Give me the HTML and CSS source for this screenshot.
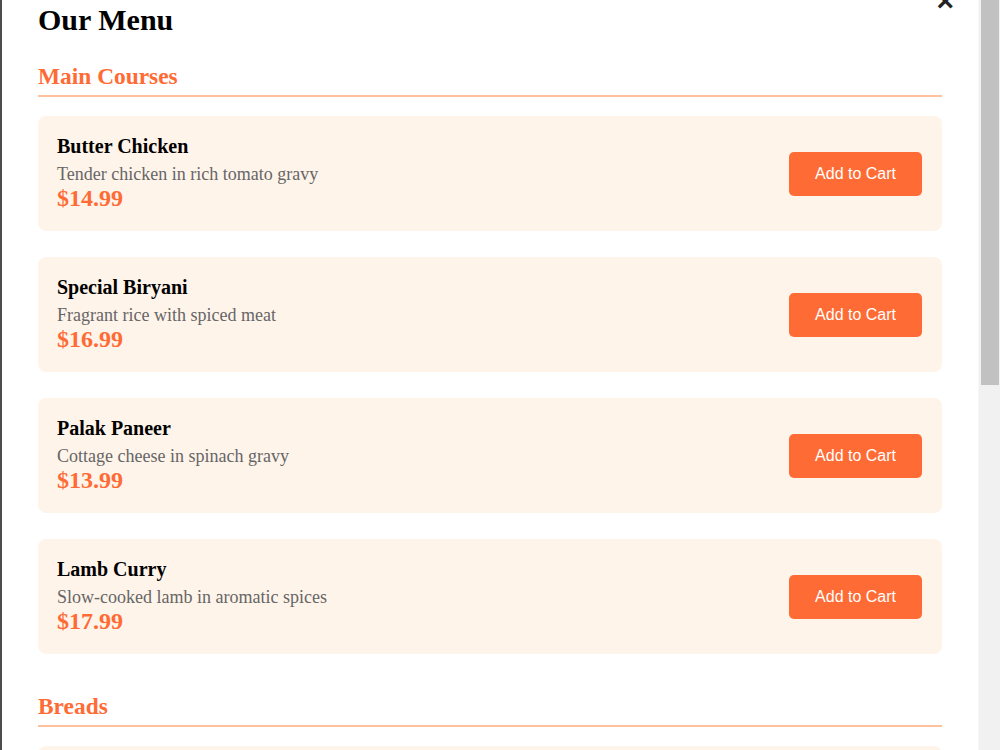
FILE: index.html
```html
<!DOCTYPE html>
<html lang="en">
<head>
  <meta charset="utf-8">
  <title>Our Menu</title>
  <link rel="stylesheet" href="styles.css">
</head>
<body>
  <div class="modal">
    <span class="close">&times;</span>
    <h1>Our Menu</h1>

    <div class="menu-section">
      <h2>Main Courses</h2>
      <div class="menu-item">
        <div class="item-info">
          <h3>Butter Chicken</h3>
          <p class="desc">Tender chicken in rich tomato gravy</p>
          <p class="price">$14.99</p>
        </div>
        <button class="add-btn">Add to Cart</button>
      </div>
      <div class="menu-item">
        <div class="item-info">
          <h3>Special Biryani</h3>
          <p class="desc">Fragrant rice with spiced meat</p>
          <p class="price">$16.99</p>
        </div>
        <button class="add-btn">Add to Cart</button>
      </div>
      <div class="menu-item">
        <div class="item-info">
          <h3>Palak Paneer</h3>
          <p class="desc">Cottage cheese in spinach gravy</p>
          <p class="price">$13.99</p>
        </div>
        <button class="add-btn">Add to Cart</button>
      </div>
      <div class="menu-item">
        <div class="item-info">
          <h3>Lamb Curry</h3>
          <p class="desc">Slow-cooked lamb in aromatic spices</p>
          <p class="price">$17.99</p>
        </div>
        <button class="add-btn">Add to Cart</button>
      </div>
    </div>

    <div class="menu-section">
      <h2>Breads</h2>
      <div class="menu-item">
        <div class="item-info">
          <h3>Garlic Naan</h3>
          <p class="desc">Soft bread brushed with garlic butter</p>
          <p class="price">$3.99</p>
        </div>
        <button class="add-btn">Add to Cart</button>
      </div>
    </div>
  </div>
  <div class="scrollbar">
    <div class="thumb"></div>
  </div>
</body>
</html>
```

FILE: styles.css
```css
html,
body {
  margin: 0;
  height: 100%;
}

body {
  display: flex;
  background-color: #4d4d4d;
  font-family: "Liberation Serif", "Times New Roman", serif;
  color: #000;
  overflow: hidden;
}

.modal {
  position: relative;
  flex: 1;
  box-sizing: border-box;
  height: 100vh;
  margin-left: 2px;
  padding: 0 36px 40px;
  overflow: hidden;
  background-color: #fff;
}

/* drawn scrollbar, the modal is scrolled to the top */
.scrollbar {
  width: 22px;
  height: 100vh;
  background-color: #f1f1f1;
  border-left: 1px solid #f7f7f7;
  box-sizing: border-box;
}
.thumb {
  height: 385px;
  margin: 0 1px 0 2px;
  background-color: #c1c1c1;
}

.close {
  position: absolute;
  top: -16px;
  right: 24px;
  font-family: "Liberation Sans", Arial, sans-serif;
  font-size: 30px;
  font-weight: bold;
  color: #222;
  cursor: pointer;
}

h1 {
  font-size: 30px;
  margin: 3px 0 26px;
}

.menu-section {
  margin-bottom: 39px;
}

h2 {
  font-size: 23.4px;
  color: #ff6b35;
  margin: 0 0 19px;
  padding-bottom: 5px;
  border-bottom: 2px solid #ffc29c;
}

.menu-item {
  display: flex;
  align-items: center;
  justify-content: space-between;
  padding: 19px 20px 19px 19px;
  margin-bottom: 26px;
  background-color: #fff4ea;
  border-radius: 8px;
}

.item-info h3 {
  font-size: 20px;
  margin: 0 0 6px;
}

.desc {
  font-size: 18px;
  color: #666;
  margin: 0;
}

.price {
  font-size: 24px;
  font-weight: bold;
  color: #ff6b35;
  margin: 0;
}

.add-btn {
  font-family: "Liberation Sans", Arial, sans-serif;
  font-size: 16px;
  line-height: 18px;
  padding: 13px 26px;
  border: none;
  border-radius: 5px;
  background-color: #ff6b35;
  color: #fff;
  cursor: pointer;
}
```
